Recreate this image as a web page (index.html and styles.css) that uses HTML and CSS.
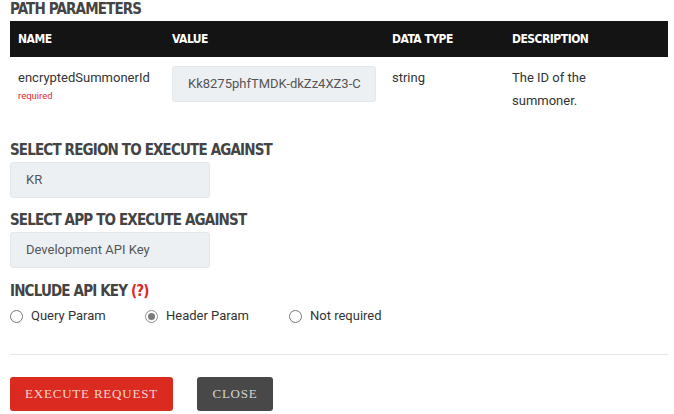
FILE: index.html
```html
<!DOCTYPE html>
<html>
<head>
<meta charset="utf-8">
<link rel="stylesheet" href="styles.css">
</head>
<body>
<div class="page">
  <h3 class="section-title">PATH PARAMETERS</h3>
  <table class="params">
    <thead>
      <tr>
        <th class="c-name">NAME</th>
        <th class="c-value">VALUE</th>
        <th class="c-type">DATA TYPE</th>
        <th class="c-desc">DESCRIPTION</th>
      </tr>
    </thead>
    <tbody>
      <tr>
        <td class="c-name">
          <div class="param-name">encryptedSummonerId</div>
          <div class="required">required</div>
        </td>
        <td class="c-value"><div class="field field-wide">Kk8275phfTMDK-dkZz4XZ3-C</div></td>
        <td class="c-type">string</td>
        <td class="c-desc">The ID of the summoner.</td>
      </tr>
    </tbody>
  </table>

  <h3 class="section-title region-title">SELECT REGION TO EXECUTE AGAINST</h3>
  <div class="field field-select">KR</div>

  <h3 class="section-title app-title">SELECT APP TO EXECUTE AGAINST</h3>
  <div class="field field-select">Development API Key</div>

  <h3 class="section-title key-title">INCLUDE API KEY <span class="help">(?)</span></h3>
  <div class="radios">
    <label class="radio r1"><span class="dot"></span>Query Param</label>
    <label class="radio r2"><span class="dot checked"></span>Header Param</label>
    <label class="radio r3"><span class="dot"></span>Not required</label>
  </div>

  <hr class="divider">

  <div class="actions">
    <button class="btn btn-exec">EXECUTE REQUEST</button>
    <button class="btn btn-close">CLOSE</button>
  </div>
</div>
</body>
</html>
```

FILE: styles.css
```css
html, body {
  margin: 0;
  padding: 0;
  background: #ffffff;
}
body {
  font-family: Roboto, "Noto Sans", sans-serif;
  color: #333333;
}
.page {
  padding: 0 6px 0 10px;
}
.section-title {
  margin: 0;
  font-family: "DejaVu Sans Condensed", "Liberation Sans", sans-serif;
  font-weight: 700;
  font-size: 15px;
  letter-spacing: -0.85px;
  line-height: 18px;
  color: #444444;
}
.params {
  width: 100%;
  border-collapse: collapse;
  margin-top: 3px;
  table-layout: fixed;
}
.params th,
.params td {
  box-sizing: border-box;
}
.params th {
  background: #141414;
  color: #ffffff;
  text-align: left;
  font-family: "DejaVu Sans Condensed", "Liberation Sans", sans-serif;
  font-weight: 700;
  font-size: 12px;
  letter-spacing: -0.5px;
  height: 36px;
  padding: 0 8px;
  vertical-align: middle;
}
.params td {
  vertical-align: top;
  padding: 9px 8px 0 8px;
  font-size: 13px;
  line-height: 23px;
  color: #333333;
}
.c-name { width: 154px; }
.c-value { width: 220px; }
.c-type { width: 120px; }
.params td.c-desc { padding-right: 60px; }
.param-name {
  line-height: 20px;
  margin-top: 2px;
}
.required {
  color: #e12a2a;
  font-size: 9.5px;
  line-height: 12px;
  margin-top: 2px;
}
.field {
  background: #edf0f3;
  border: 1px solid #e3e7ea;
  border-radius: 3px;
  color: #555555;
  font-size: 13px;
  line-height: 34px;
  padding: 0 15px;
  box-sizing: border-box;
  height: 36px;
}
.field-wide {
  width: 204px;
  white-space: nowrap;
  overflow: hidden;
}
.field-select {
  width: 200px;
  margin-top: 3px;
}
.region-title { margin-top: 29px; }
.app-title { margin-top: 13px; }
.key-title { margin-top: 14px; }
.help { color: #e0281f; }
.radios {
  display: flex;
  margin-top: 7px;
  font-size: 13px;
  color: #333333;
  line-height: 18px;
}
.radio {
  display: flex;
  align-items: center;
}
.r1 { width: 135px; }
.r2 { width: 144px; }
.dot {
  width: 11px;
  height: 11px;
  border: 1px solid #767676;
  border-radius: 50%;
  margin-right: 8px;
  position: relative;
  background: #fff;
}
.dot.checked {
  border-color: #8f8f8f;
}
.dot.checked::after {
  content: "";
  position: absolute;
  left: 2px;
  top: 2px;
  width: 7px;
  height: 7px;
  border-radius: 50%;
  background: #7a7a7a;
}
.divider {
  border: 0;
  border-top: 1px solid #e1e7e7;
  margin: 29px 0 0 0;
}
.actions {
  display: flex;
  gap: 24px;
  margin-top: 22px;
}
.btn {
  border: 0;
  border-radius: 3px;
  height: 34px;
  color: #f4d6d3;
  font-family: "Liberation Serif", "DejaVu Serif", serif;
  font-size: 13px;
  letter-spacing: 0.8px;
  padding: 0;
  white-space: nowrap;
  text-align: center;
}
.btn-exec {
  background: #db2a20;
  width: 163px;
}
.btn-close {
  background: #484848;
  color: #d4d4d4;
  width: 76px;
}
```
